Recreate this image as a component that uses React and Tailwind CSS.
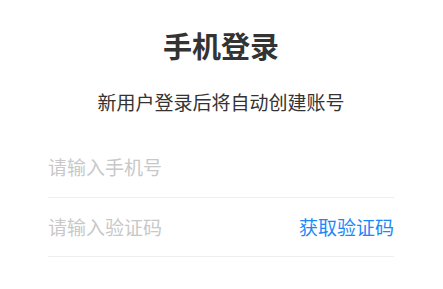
export default function App() {
  return (
    <main
      className="min-h-screen bg-white px-[48px] pr-[49px]"
      style={{ fontFamily: '"Noto Sans CJK SC", "Noto Sans", sans-serif' }}
    >
      <h1 className="pt-[26px] text-center text-[29px] font-bold leading-[38px] text-[#333]">
        手机登录
      </h1>
      <p className="mt-[25px] text-center text-[19px] leading-[26px] text-[#333]">
        新用户登录后将自动创建账号
      </p>
      <form className="mt-[23px]">
        <div className="flex h-[60px] items-center border-b border-[#eee]">
          <input
            type="tel"
            placeholder="请输入手机号"
            className="w-full bg-transparent text-[19px] text-[#333] outline-none placeholder:text-[#c8c8c8]"
          />
        </div>
        <div className="flex h-[59px] items-center border-b border-[#eee]">
          <input
            type="text"
            placeholder="请输入验证码"
            className="min-w-0 flex-1 bg-transparent text-[19px] text-[#333] outline-none placeholder:text-[#c8c8c8]"
          />
          <button type="button" className="shrink-0 text-[19px] text-[#1989fa]">
            获取验证码
          </button>
        </div>
      </form>
    </main>
  );
}
